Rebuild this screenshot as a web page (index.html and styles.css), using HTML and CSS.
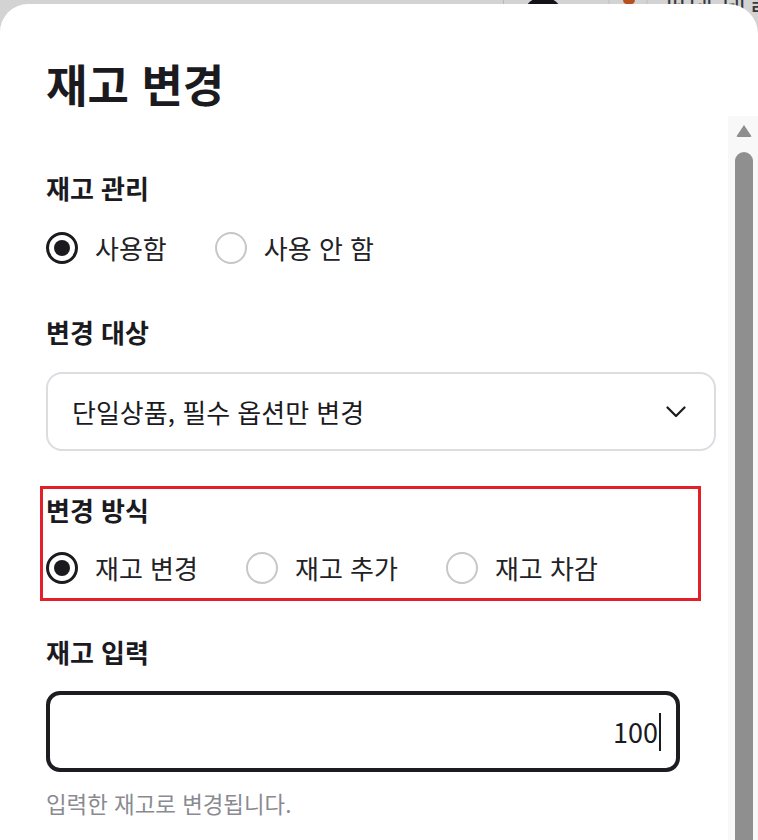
FILE: index.html
```html
<!DOCTYPE html>
<html lang="ko">
<head>
<meta charset="utf-8">
<title>재고 변경</title>
<link rel="stylesheet" href="styles.css">
</head>
<body>
<div class="backdrop">
  <span class="bd-line"></span>
  <span class="bd-avatar"></span>
  <span class="bd-ring"><span class="bd-dot"></span></span>
  <span class="bd-text">파레 내낼</span>
</div>

<div class="sheet">
  <header class="sheet-header">
    <h1 class="title">재고 변경</h1>
  </header>

  <div class="sheet-body">
    <div class="content">
      <section class="field field-first">
        <h2 class="label">재고 관리</h2>
        <div class="radio-group">
          <label class="radio-item"><span class="radio checked"></span><span class="radio-text">사용함</span></label>
          <label class="radio-item"><span class="radio"></span><span class="radio-text">사용 안 함</span></label>
        </div>
      </section>

      <section class="field field-target">
        <h2 class="label">변경 대상</h2>
        <div class="select">
          <span class="select-text">단일상품, 필수 옵션만 변경</span>
          <svg class="chevron" width="20" height="12" viewBox="0 0 20 12" aria-hidden="true">
            <path d="M1.5 1.5 L10 10 L18.5 1.5" fill="none" stroke="#1b1b1f" stroke-width="2.2" stroke-linecap="round" stroke-linejoin="round"/>
          </svg>
        </div>
      </section>

      <section class="field field-method highlight">
        <h2 class="label">변경 방식</h2>
        <div class="radio-group">
          <label class="radio-item"><span class="radio checked"></span><span class="radio-text">재고 변경</span></label>
          <label class="radio-item"><span class="radio"></span><span class="radio-text">재고 추가</span></label>
          <label class="radio-item"><span class="radio"></span><span class="radio-text">재고 차감</span></label>
        </div>
      </section>

      <section class="field field-input">
        <h2 class="label">재고 입력</h2>
        <div class="input">
          <span class="input-value">100</span><span class="caret"></span>
        </div>
        <p class="help">입력한 재고로 변경됩니다.</p>
      </section>
    </div>

    <div class="scrollbar">
      <span class="scroll-arrow"></span>
      <span class="scroll-thumb"></span>
    </div>
  </div>
</div>
</body>
</html>
```

FILE: styles.css
```css
* {
  box-sizing: border-box;
}

html, body {
  margin: 0;
  padding: 0;
  height: 100%;
}

body {
  background: #d3d3d3;
  font-family: "Noto Sans CJK KR", "Noto Sans", sans-serif;
  color: #1b1b1f;
  overflow: hidden;
  position: relative;
}

/* dimmed page behind the sheet */
.backdrop {
  position: absolute;
  inset: 0 0 auto 0;
  height: 40px;
  overflow: hidden;
  z-index: 0;
}

.bd-line {
  position: absolute;
  left: 503px;
  top: 0;
  width: 1px;
  height: 10px;
  background: #b9b9b9;
}

.bd-avatar {
  position: absolute;
  left: 523px;
  top: -3px;
  width: 40px;
  height: 40px;
  border-radius: 50%;
  background: #141418;
}

.bd-ring {
  position: absolute;
  left: 608px;
  top: -22px;
  width: 40px;
  height: 40px;
  border-radius: 50%;
  border: 1px solid #c0c0c0;
}

.bd-dot {
  position: absolute;
  left: 14px;
  top: 16px;
  width: 12px;
  height: 10px;
  border-radius: 50%;
  background: #b9501f;
}

.bd-text {
  position: absolute;
  left: 664px;
  top: -20px;
  font-size: 26px;
  color: #3a3a3e;
  white-space: nowrap;
  letter-spacing: 1px;
}

/* sheet */
.sheet {
  position: relative;
  z-index: 1;
  margin-top: 4px;
  height: 836px;
  background: #ffffff;
  border-radius: 28px 30px 0 0;
  display: flex;
  flex-direction: column;
  overflow: hidden;
}

.sheet-header {
  height: 112px;
  flex: none;
  padding: 56px 0 0 46px;
}

.title {
  margin: 0;
  font-size: 45px;
  line-height: 48px;
  font-weight: 700;
  color: #1b1b1f;
  letter-spacing: 0;
}

.sheet-body {
  flex: 1;
  display: flex;
  min-height: 0;
}

.content {
  flex: 1;
  padding-left: 46px;
}

/* scrollbar */
.scrollbar {
  flex: none;
  width: 30px;
  background: #f8f8f8;
  display: flex;
  flex-direction: column;
  align-items: center;
  padding-top: 9px;
  padding-left: 1px;
}

.scroll-arrow {
  width: 0;
  height: 0;
  border-left: 8px solid transparent;
  border-right: 8px solid transparent;
  border-bottom: 12px solid #8e8e8e;
  border-radius: 2px;
}

.scroll-thumb {
  margin-top: 15px;
  width: 18px;
  flex: 1;
  background: #8f8f8f;
  border-radius: 9px 9px 0 0;
}

/* fields */
.field {
  display: flex;
  flex-direction: column;
}

.field-first {
  padding-top: 55px;
}

.field-target {
  margin-top: 50px;
}

.field-method {
  margin-top: 35px;
}

.field-input {
  margin-top: 34px;
}

.label {
  margin: 0;
  font-size: 26px;
  line-height: 34px;
  font-weight: 700;
  color: #1b1b1f;
  letter-spacing: 0;
}

.radio-group {
  display: flex;
  align-items: center;
  gap: 48px;
  margin-top: 26px;
}

.radio-item {
  display: flex;
  align-items: center;
  gap: 17px;
  height: 34px;
}

.radio {
  width: 32px;
  height: 32px;
  border-radius: 50%;
  border: 2px solid #c6c6cb;
  background: #fff;
  display: flex;
  align-items: center;
  justify-content: center;
  flex: none;
}

.radio.checked {
  border: 3px solid #1b1b1f;
}

.radio.checked::after {
  content: "";
  width: 16px;
  height: 16px;
  border-radius: 50%;
  background: #1b1b1f;
}

.radio-text {
  font-size: 26px;
  line-height: 34px;
  color: #222226;
  letter-spacing: 0;
}

/* select */
.select {
  margin-top: 23px;
  width: 670px;
  height: 79px;
  border: 2px solid #dcdce1;
  border-radius: 16px;
  display: flex;
  align-items: center;
  justify-content: space-between;
  padding: 0 28px 0 24px;
}

.select-text {
  font-size: 26px;
  color: #1b1b1f;
  letter-spacing: 0;
}

.chevron {
  display: block;
}

/* highlighted section */
.highlight {
  width: 661px;
  margin-left: -6px;
  border: 3px solid #e3202a;
  padding: 4px 0 13px 3px;
}

.highlight .radio-group {
  margin-top: 24px;
}

/* number input */
.input {
  margin-top: 22px;
  width: 634px;
  height: 81px;
  border: 4px solid #1c1c21;
  border-radius: 14px;
  display: flex;
  align-items: center;
  justify-content: flex-end;
  padding-right: 15px;
}

.input-value {
  font-size: 27px;
  color: #1b1b1f;
  letter-spacing: 0;
}

.caret {
  width: 2px;
  height: 38px;
  background: #1b1b1f;
  margin-left: 1px;
}

.help {
  margin: 16px 0 0;
  font-size: 22.4px;
  line-height: 30px;
  color: #8a8a91;
  letter-spacing: 0;
}
```
